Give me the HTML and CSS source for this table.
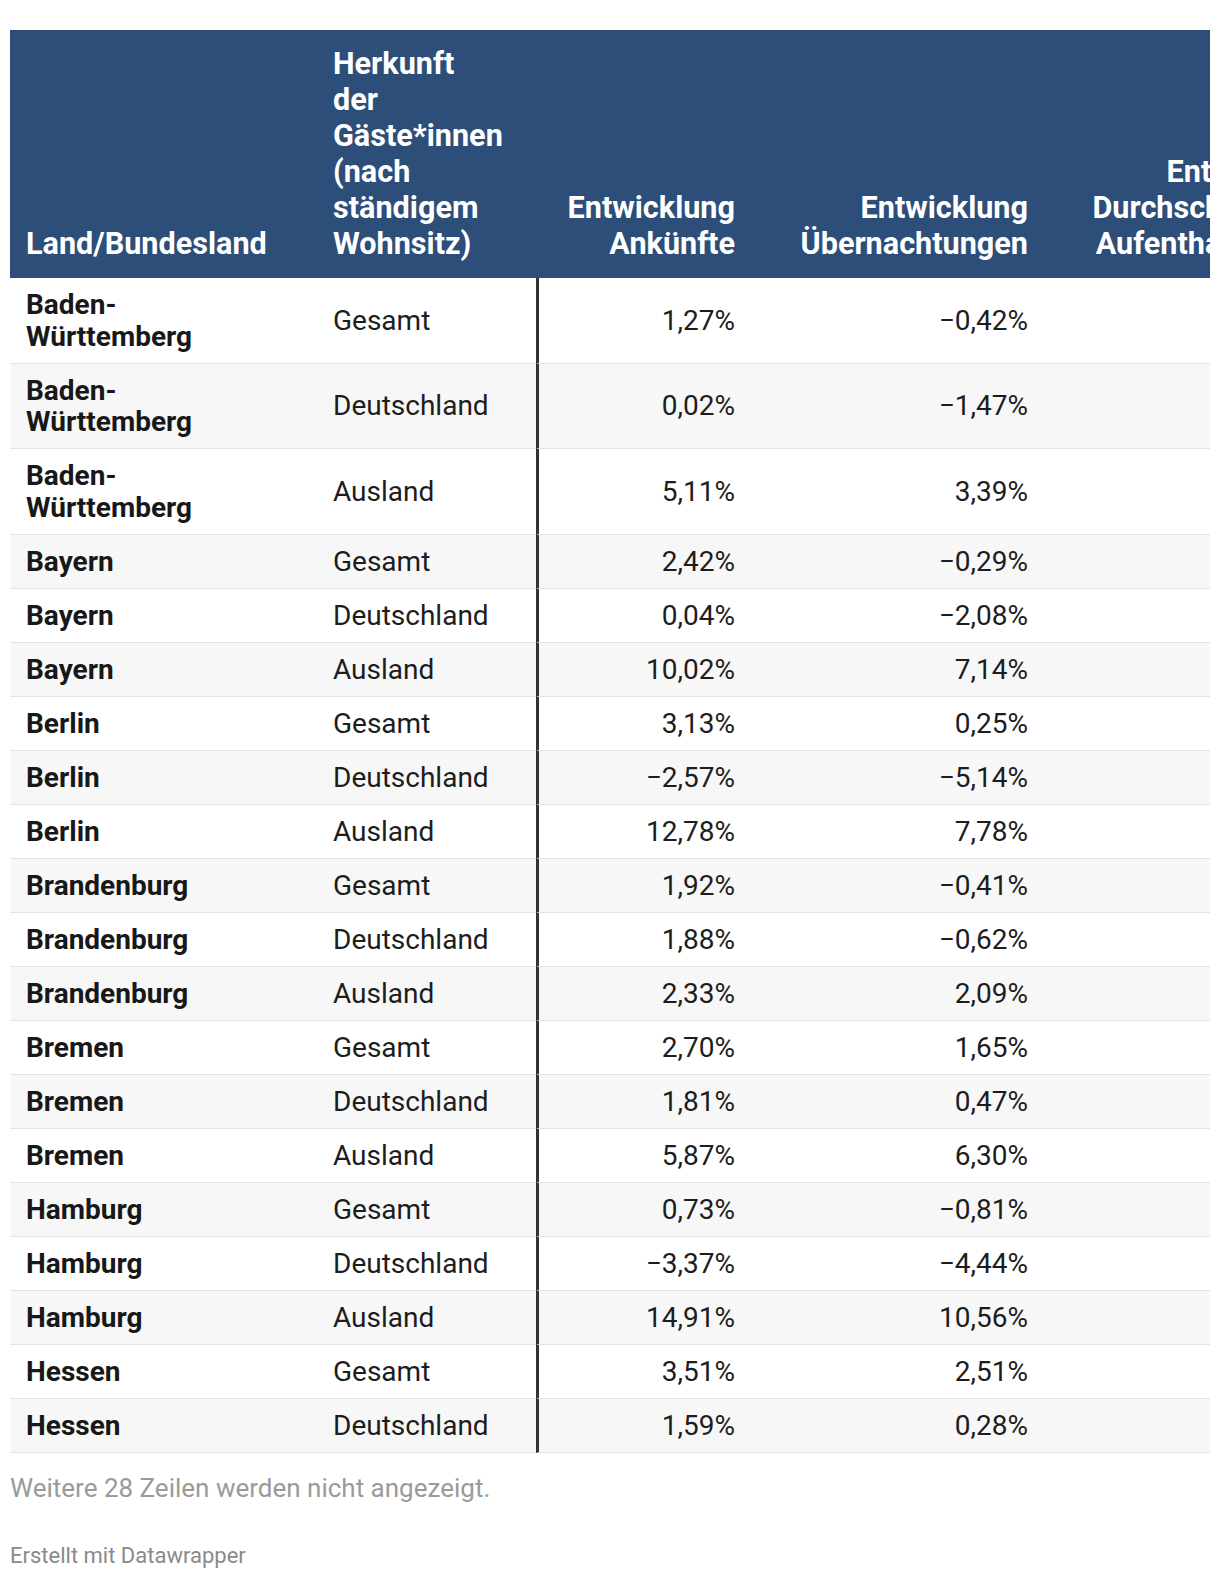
FILE: index.html
```html
<!DOCTYPE html>
<html lang="de">
<head>
<meta charset="utf-8">
<title>Tabelle</title>
<link rel="stylesheet" href="styles.css">
</head>
<body>
<div class="chart">
  <div class="table-wrap">
    <table class="dw-table">
      <colgroup>
        <col class="c-land">
        <col class="c-herkunft">
        <col class="c-ank">
        <col class="c-ueb">
        <col class="c-dauer">
      </colgroup>
      <thead>
        <tr>
          <th class="left">Land/Bundesland</th>
          <th class="left">Herkunft<br>der<br>Gäste*innen<br>(nach<br>ständigem<br>Wohnsitz)</th>
          <th class="right">Entwicklung<br>Ankünfte</th>
          <th class="right">Entwicklung<br>Übernachtungen</th>
          <th class="right">Entwicklung<br>Durchschnittliche<br>Aufenthaltsdauer</th>
        </tr>
      </thead>
      <tbody>
        <tr><td class="land">Baden-<br>Württemberg</td><td>Gesamt</td><td class="num sep">1,27%</td><td class="num">−0,42%</td><td class="num"></td></tr>
        <tr><td class="land">Baden-<br>Württemberg</td><td>Deutschland</td><td class="num sep">0,02%</td><td class="num">−1,47%</td><td class="num"></td></tr>
        <tr><td class="land">Baden-<br>Württemberg</td><td>Ausland</td><td class="num sep">5,11%</td><td class="num">3,39%</td><td class="num"></td></tr>
        <tr><td class="land">Bayern</td><td>Gesamt</td><td class="num sep">2,42%</td><td class="num">−0,29%</td><td class="num"></td></tr>
        <tr><td class="land">Bayern</td><td>Deutschland</td><td class="num sep">0,04%</td><td class="num">−2,08%</td><td class="num"></td></tr>
        <tr><td class="land">Bayern</td><td>Ausland</td><td class="num sep">10,02%</td><td class="num">7,14%</td><td class="num"></td></tr>
        <tr><td class="land">Berlin</td><td>Gesamt</td><td class="num sep">3,13%</td><td class="num">0,25%</td><td class="num"></td></tr>
        <tr><td class="land">Berlin</td><td>Deutschland</td><td class="num sep">−2,57%</td><td class="num">−5,14%</td><td class="num"></td></tr>
        <tr><td class="land">Berlin</td><td>Ausland</td><td class="num sep">12,78%</td><td class="num">7,78%</td><td class="num"></td></tr>
        <tr><td class="land">Brandenburg</td><td>Gesamt</td><td class="num sep">1,92%</td><td class="num">−0,41%</td><td class="num"></td></tr>
        <tr><td class="land">Brandenburg</td><td>Deutschland</td><td class="num sep">1,88%</td><td class="num">−0,62%</td><td class="num"></td></tr>
        <tr><td class="land">Brandenburg</td><td>Ausland</td><td class="num sep">2,33%</td><td class="num">2,09%</td><td class="num"></td></tr>
        <tr><td class="land">Bremen</td><td>Gesamt</td><td class="num sep">2,70%</td><td class="num">1,65%</td><td class="num"></td></tr>
        <tr><td class="land">Bremen</td><td>Deutschland</td><td class="num sep">1,81%</td><td class="num">0,47%</td><td class="num"></td></tr>
        <tr><td class="land">Bremen</td><td>Ausland</td><td class="num sep">5,87%</td><td class="num">6,30%</td><td class="num"></td></tr>
        <tr><td class="land">Hamburg</td><td>Gesamt</td><td class="num sep">0,73%</td><td class="num">−0,81%</td><td class="num"></td></tr>
        <tr><td class="land">Hamburg</td><td>Deutschland</td><td class="num sep">−3,37%</td><td class="num">−4,44%</td><td class="num"></td></tr>
        <tr><td class="land">Hamburg</td><td>Ausland</td><td class="num sep">14,91%</td><td class="num">10,56%</td><td class="num"></td></tr>
        <tr><td class="land">Hessen</td><td>Gesamt</td><td class="num sep">3,51%</td><td class="num">2,51%</td><td class="num"></td></tr>
        <tr><td class="land">Hessen</td><td>Deutschland</td><td class="num sep">1,59%</td><td class="num">0,28%</td><td class="num"></td></tr>
      </tbody>
    </table>
  </div>
  <p class="more">Weitere 28 Zeilen werden nicht angezeigt.</p>
  <p class="credit">Erstellt mit Datawrapper</p>
</div>
</body>
</html>
```
FILE: styles.css
```css
html, body {
  margin: 0;
  padding: 0;
  background: #ffffff;
}

body {
  font-family: Roboto, "Noto Sans", "Liberation Sans", sans-serif;
  color: #1d1d1d;
}

.chart {
  padding: 30px 10px 0 10px;
}

.table-wrap {
  overflow: hidden;
  width: 1200px;
}

.dw-table {
  table-layout: fixed;
  border-collapse: separate;
  border-spacing: 0;
  width: 1340px;
}

.c-land { width: 307px; }
.c-herkunft { width: 219px; }
.c-ank { width: 215px; }
.c-ueb { width: 293px; }
.c-dauer { width: 306px; }

.dw-table th {
  box-sizing: border-box;
  background: #2c4e79;
  color: #ffffff;
  font-weight: 700;
  font-size: 30.6px;
  line-height: 36px;
  padding: 16px 16px 16px 16px;
  vertical-align: bottom;
}

.dw-table th.left { text-align: left; }
.dw-table th.right { text-align: right; }

.dw-table td {
  box-sizing: border-box;
  font-size: 28px;
  line-height: 31.5px;
  padding: 11px 16px 10.5px 16px;
  border-bottom: 1px solid #e5e5e5;
  vertical-align: middle;
  white-space: nowrap;
}

.dw-table tbody tr:nth-child(even) td {
  background: #f7f7f7;
}

.dw-table td.land {
  font-weight: 700;
  color: #181818;
}

.dw-table td.num {
  text-align: right;
}

.dw-table td.sep {
  border-left: 3px solid #333333;
}

.more {
  margin: 19px 0 0 0;
  font-size: 26px;
  line-height: 32px;
  color: #9a9a9a;
}

.credit {
  margin: 39px 0 0 0;
  font-size: 22px;
  line-height: 26px;
  color: #8a8a8a;
}
```
